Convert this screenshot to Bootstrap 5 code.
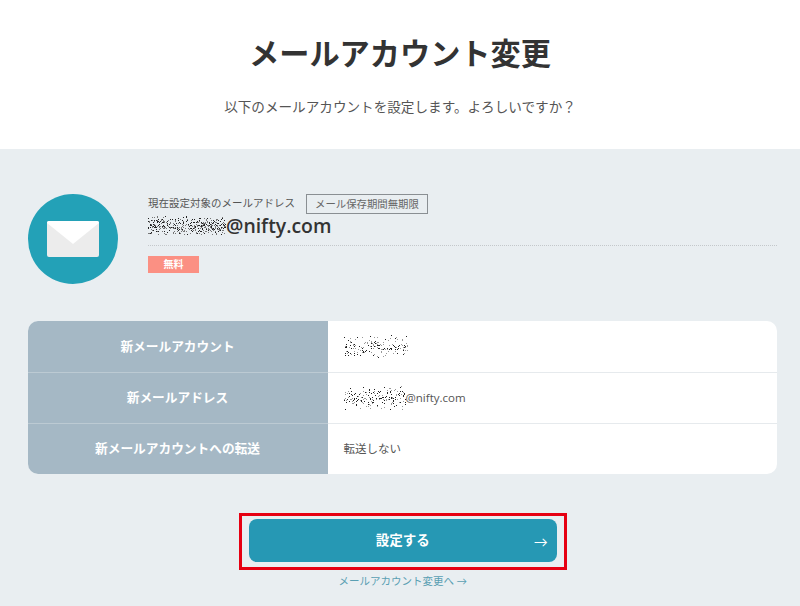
<!DOCTYPE html>
<html lang="ja">
  <head>
    <meta charset="UTF-8" />
    <meta name="viewport" content="width=device-width, initial-scale=1.0" />
    <title>メールアカウント変更</title>
    <link
      href="https://cdn.jsdelivr.net/npm/bootstrap@5.3.0/dist/css/bootstrap.min.css"
      rel="stylesheet"
    />
    <style>
      body {
        font-family: "Lato", "Noto Sans CJK JP", sans-serif;
        color: #333;
        background-color: #e9eef1;
        overflow: hidden;
      }
      .page-head {
        height: 149px;
        background-color: #fff;
        padding-top: 33px;
      }
      .page-head h1 {
        font-size: 30.2px;
        font-weight: 700;
        line-height: 40px;
        margin-bottom: 24px;
      }
      .page-head p {
        font-size: 13.6px;
        line-height: 20px;
        color: #555;
      }
      .page-main {
        padding: 45px 23px 0 27.5px;
      }
      .mail-circle {
        width: 90px;
        height: 90px;
        border-radius: 50%;
        background-color: #23a1b7;
        flex-shrink: 0;
      }
      .account-info {
        margin-left: 30.5px;
      }
      .account-label {
        font-size: 10.5px;
        color: #555;
      }
      .period-tag {
        font-size: 10.4px;
        line-height: 18px;
        color: #666;
        border: 1px solid #8a8f93;
        padding: 0 8px;
        margin-left: 11px;
      }
      .account-mail {
        font-family: "Open Sans", "Noto Sans CJK JP", sans-serif;
        font-size: 19.4px;
        font-weight: 600;
        line-height: 24px;
        padding-bottom: 7px;
        border-bottom: 1px dotted #c4c8cb;
        margin-bottom: 10px;
      }
      .free-tag {
        width: 51px;
        height: 17px;
        line-height: 17px;
        font-size: 10px;
        font-weight: 700;
        text-align: center;
        color: #fff;
        background-color: #fb9083;
      }
      .setting-table {
        margin-top: 37px;
        border-radius: 10px;
        overflow: hidden;
        background-color: #fff;
      }
      .setting-row {
        height: 51px;
        font-size: 12.7px;
      }
      .setting-row + .setting-row {
        border-top: 1px solid #e6eaed;
      }
      .setting-name {
        width: 300px;
        font-weight: 700;
        color: #fff;
        background-color: #a5b8c5;
      }
      .setting-value {
        padding-left: 16px;
        font-family: "Open Sans", "Noto Sans CJK JP", sans-serif;
        font-size: 11.5px;
        color: #555;
      }
      .setting-row + .setting-row .setting-name {
        margin-top: -1px;
        border-top: 1px solid #bccad3;
        height: 51px;
      }
      .submit-frame {
        width: 328px;
        height: 57px;
        margin-top: 39px;
        margin-left: 1px;
        padding: 3px 7px;
        border: 3px solid #e60012;
      }
      .submit-button {
        height: 43px;
        font-size: 13.5px;
        font-weight: 700;
        color: #fff;
        background-color: #2698b4;
        border-radius: 8px;
      }
      .submit-arrow {
        right: 9px;
        top: 50%;
        transform: translateY(-50%);
        font-size: 14px;
        font-weight: 400;
      }
      .change-link {
        font-size: 10.5px;
        line-height: 16px;
        margin-top: 3px;
        margin-left: 1px;
        color: #5a9fb3;
        text-decoration: none;
      }
      .scribble {
        display: block;
      }
    </style>
  </head>
  <body>
    <!-- Title -->
    <div class="page-head text-center">
      <h1>メールアカウント変更</h1>
      <p class="mb-0">以下のメールアカウントを設定します。よろしいですか？</p>
    </div>

    <div class="page-main">
      <!-- Current account -->
      <div class="d-flex">
        <div class="mail-circle d-flex align-items-center justify-content-center">
          <svg width="52" height="36" viewBox="0 0 52 36">
            <rect width="52" height="36" rx="2" fill="#ececec" />
            <path d="M0 2a2 2 0 0 1 2-2h48a2 2 0 0 1 2 2L26 23z" fill="#fff" />
          </svg>
        </div>
        <div class="account-info flex-grow-1">
          <div class="d-flex align-items-center">
            <span class="account-label">現在設定対象のメールアドレス</span>
            <span class="period-tag">メール保存期間無期限</span>
          </div>
          <div class="account-mail d-flex align-items-center">
            <svg class="scribble" data-dots="420" data-dark="1" width="78" height="20"></svg>
            <span>@nifty.com</span>
          </div>
          <div class="free-tag">無料</div>
        </div>
      </div>

      <!-- New account table -->
      <div class="setting-table">
        <div class="setting-row d-flex">
          <div class="setting-name d-flex align-items-center justify-content-center">新メールアカウント</div>
          <div class="setting-value d-flex align-items-center">
            <svg class="scribble" data-dots="170" width="64" height="24"></svg>
          </div>
        </div>
        <div class="setting-row d-flex">
          <div class="setting-name d-flex align-items-center justify-content-center">新メールアドレス</div>
          <div class="setting-value d-flex align-items-center">
            <svg class="scribble" data-dots="190" width="62" height="24"></svg>
            <span>@nifty.com</span>
          </div>
        </div>
        <div class="setting-row d-flex">
          <div class="setting-name d-flex align-items-center justify-content-center">新メールアカウントへの転送</div>
          <div class="setting-value d-flex align-items-center">転送しない</div>
        </div>
      </div>

      <!-- Submit -->
      <div class="d-flex flex-column align-items-center">
        <div class="submit-frame">
          <div class="submit-button position-relative d-flex align-items-center justify-content-center">
            設定する
            <span class="submit-arrow position-absolute">→</span>
          </div>
        </div>
        <a class="change-link" href="#">メールアカウント変更へ →</a>
      </div>
    </div>

    <script src="https://cdn.jsdelivr.net/npm/bootstrap@5.3.0/dist/js/bootstrap.bundle.min.js"></script>
    <script>
      // Speckle for the masked parts of the addresses
      let seed = 7;
      function rnd() {
        seed = (seed * 16807) % 2147483647;
        return seed / 2147483647;
      }
      document.querySelectorAll(".scribble").forEach((svg) => {
        const w = +svg.getAttribute("width");
        const h = +svg.getAttribute("height");
        const dark = svg.dataset.dark;
        let out = "";
        for (let i = 0; i < +svg.dataset.dots; i++) {
          const x = Math.floor(rnd() * w);
          const y = Math.floor(h / 2 + (rnd() + rnd() - 1) * h * 0.5);
          const fill = rnd() < 0.5 ? "#222" : dark ? "#777" : "#999";
          out += `<rect x="${x}" y="${y}" width="1" height="1" fill="${fill}"/>`;
        }
        svg.innerHTML = out;
      });
    </script>
  </body>
</html>
